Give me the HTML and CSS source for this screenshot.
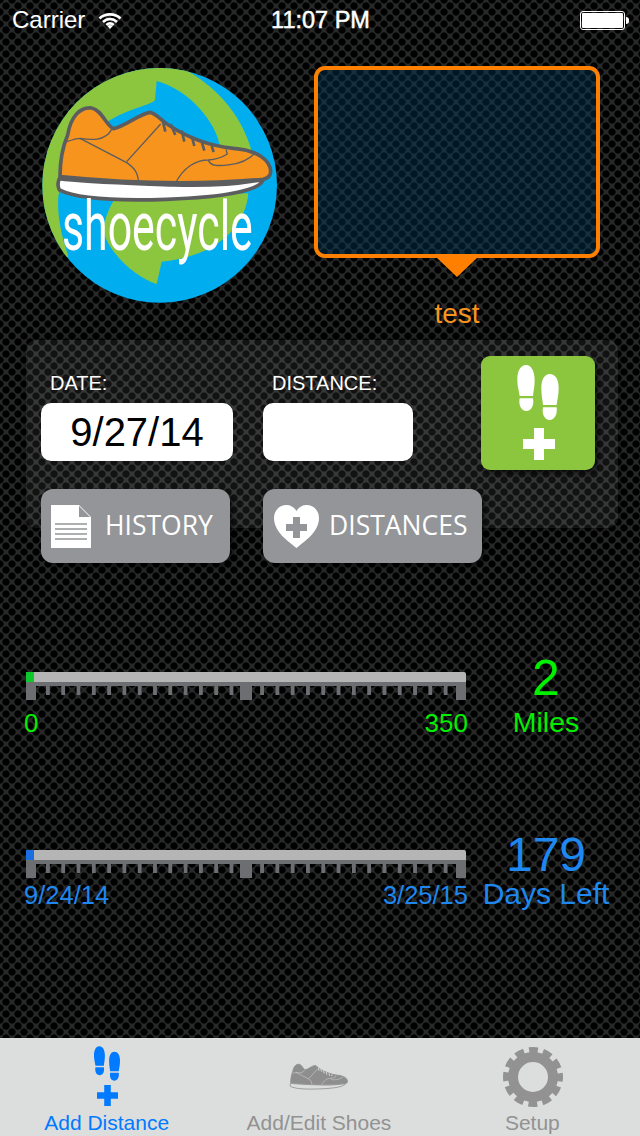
FILE: index.html
```html
<!DOCTYPE html>
<html lang="en">
<head>
<meta charset="utf-8">
<title>ShoeCycle</title>
<link rel="stylesheet" href="styles.css">
</head>
<body>
<svg class="defs" width="0" height="0" aria-hidden="true">
  <symbol id="prints" viewBox="0 0 124 165">
    <path d="M26 0C42 0 52 18 52 46C52 66 48 80 47 93L7 93C5 76 0 66 0 42C0 16 11 0 26 0Z"/>
    <path d="M7 100L47 100C51 122 42 138 27 138C12 138 3 122 7 100Z"/>
    <path d="M97 27C82 27 72 43 72 70C72 92 76 107 77 120L118 120C120 102 124 92 124 68C124 42 113 27 97 27Z"/>
    <path d="M77 127L118 127C121 149 111 165 97 165C82 165 73 149 77 127Z"/>
  </symbol>
  <symbol id="shoe" viewBox="165 310 660 300">
    <path class="shoe-sole" d="M178 536C250 546 400 550 520 555C620 558 720 552 790 538C782 570 680 592 500 598C380 602 240 602 178 570Q170 553 178 536Z"/>
    <path class="shoe-upper" d="M180 530C180 490 188 440 203 405C212 350 240 320 275 324C305 330 318 375 340 386C375 380 420 340 450 337C470 340 480 360 510 378C560 410 630 438 700 445C770 450 812 480 812 515C812 530 800 535 790 538C600 555 400 552 180 530Z"/>
    <g class="shoe-line">
      <path d="M200 425C215 420 230 415 240 415C270 420 315 425 335 388"/>
      <path d="M240 415L380 488C405 505 415 520 415 548"/>
      <path d="M380 485L482 372"/>
      <path d="M525 553C550 500 590 480 625 480C650 478 670 470 682 462L678 448"/>
      <path d="M625 480C630 500 660 498 690 494C720 490 745 480 762 462"/>
    </g>
    <g class="shoe-lace">
      <path d="M488 362L496 395M512 372L526 405M545 392L553 425M575 408L583 438M605 425L613 452M635 438L641 456"/>
    </g>
  </symbol>
</svg>

<div class="screen">
  <header class="status">
    <div class="status-left">
      <span>Carrier</span>
      <svg class="wifi" viewBox="0 0 24 17" aria-hidden="true">
        <path class="wifi-arc" d="M1.5 6.5C7 1 17 1 22.5 6.5M5 10C9 6 15 6 19 10M8.3 13C10.5 11 13.5 11 15.7 13"/>
        <path class="wifi-dot" d="M12 17L9.3 14C11 12.8 13 12.8 14.7 14Z"/>
      </svg>
    </div>
    <span class="clock">11:07 PM</span>
    <div class="battery"><div class="battery-body"><div class="battery-fill"></div></div><div class="battery-tip"></div></div>
  </header>

  <section class="top">
    <svg class="logo" viewBox="120 195 720 725" role="img" aria-label="ShoeCycle logo">
      <defs><clipPath id="globe"><circle cx="479" cy="556" r="352"/></clipPath></defs>
      <circle cx="479" cy="556" r="352" fill="#00aeef"/>
      <g clip-path="url(#globe)" fill="#8cc63f">
        <path d="M530 195C620 240 720 320 757 460L660 440C650 370 570 270 470 243L465 300C455 315 400 320 330 360L200 450L175 590C170 660 190 720 205 770L100 800L100 195Z"/>
        <path d="M745 580C735 690 640 770 485 785L470 852C400 830 320 750 310 690C315 650 330 620 345 595Z"/>
      </g>
      <use href="#shoe" class="logo-shoe" x="165" y="310" width="660" height="300"/>
      <text class="logo-word" transform="translate(186 750) scale(0.63 1)">shoecycle</text>
    </svg>
    <div class="shoe-name">
      <div class="bubble"></div>
      <div class="bubble-tail"></div>
      <div class="name">test</div>
    </div>
  </section>

  <section class="panel">
    <div class="form">
      <label class="field-label">DATE:</label>
      <label class="field-label">DISTANCE:</label>
      <div class="input input-date">9/27/14</div>
      <div class="input input-distance"></div>
      <div class="btn btn-history">
        <svg class="btn-icon doc" viewBox="0 0 40 43" aria-hidden="true">
          <path class="doc-page" d="M0 0H28L40 12V43H0Z"/>
          <path class="doc-fold" d="M28 1L39 12H28Z"/>
          <path class="doc-lines" d="M4 19H36M4 24H36M4 29H36M4 34H36"/>
        </svg>
        <span>HISTORY</span>
      </div>
      <div class="btn btn-distances">
        <svg class="btn-icon heart" viewBox="0 0 45 43" aria-hidden="true">
          <path class="heart-shape" d="M22.5 43C14 36 0 27 0 13C0 5 6 0 12.500 0C17 0 20.500 2.500 22.500 6C24.500 2.500 28 0 32.500 0C39 0 45 5 45 13C45 27 31 36 22.500 43Z"/>
          <path class="heart-plus" d="M19 12H26V19H33V26H26V33H19V26H12V19H19Z"/>
        </svg>
        <span>DISTANCES</span>
      </div>
    </div>
    <div class="add-btn">
      <svg class="add-prints"><use href="#prints"/></svg>
      <svg class="add-plus" viewBox="0 0 32 32" aria-hidden="true"><path d="M11 0H21V11H32V21H21V32H11V21H0V11H11Z"/></svg>
    </div>
  </section>

  <section class="stat stat-miles">
    <div class="gauge">
      <div class="track"><div class="fill"></div></div>
      <div class="scale"><i></i><i></i><i></i></div>
      <div class="ends"><span>0</span><span>350</span></div>
    </div>
    <div class="reading">
      <div class="value">2</div>
      <div class="unit">Miles</div>
    </div>
  </section>

  <section class="stat stat-days">
    <div class="gauge">
      <div class="track"><div class="fill"></div></div>
      <div class="scale"><i></i><i></i><i></i></div>
      <div class="ends"><span>9/24/14</span><span>3/25/15</span></div>
    </div>
    <div class="reading">
      <div class="value">179</div>
      <div class="unit">Days Left</div>
    </div>
  </section>

  <nav class="tabs">
    <div class="tab tab-active">
      <div class="tab-icon tab-icon-add">
        <svg class="tab-prints"><use href="#prints"/></svg>
        <svg class="tab-plus" viewBox="0 0 32 32" aria-hidden="true"><path d="M11 0H21V11H32V21H21V32H11V21H0V11H11Z"/></svg>
      </div>
      <span>Add Distance</span>
    </div>
    <div class="tab tab-shift">
      <div class="tab-icon">
        <svg class="tab-shoe"><use href="#shoe"/></svg>
      </div>
      <span>Add/Edit Shoes</span>
    </div>
    <div class="tab tab-shift">
      <div class="tab-icon">
        <svg class="gear" viewBox="0 0 60 60" aria-hidden="true">
          <circle class="gear-body" cx="30" cy="30" r="20"/>
          <circle class="gear-teeth" cx="30" cy="30" r="27"/>
        </svg>
      </div>
      <span>Setup</span>
    </div>
  </nav>
</div>
</body>
</html>
```

FILE: styles.css
```css
* { box-sizing: border-box; }
html, body { margin: 0; padding: 0; }
body {
  width: 640px;
  height: 1136px;
  overflow: hidden;
  font-family: "Liberation Sans", Arial, sans-serif;
}
.defs { display: block; height: 0; }

.screen {
  width: 640px;
  height: 1136px;
  display: flex;
  flex-direction: column;
  background-color: #272828;
  background-image:
    radial-gradient(circle at center, #000 3.2px, rgba(0,0,0,0) 4px),
    radial-gradient(circle at center, #000 3.2px, rgba(0,0,0,0) 4px);
  background-size: 12px 12px;
  background-position: 0 0, 6px 6px;
}

/* status bar */
.status {
  height: 40px;
  padding: 0 11px 0 12px;
  display: grid;
  grid-template-columns: 1fr auto 1fr;
  align-items: center;
  color: #fff;
  font-size: 24px;
}
.status-left { display: flex; align-items: center; gap: 13px; }
.wifi { width: 24px; height: 17px; }
.wifi-arc { fill: none; stroke: #fff; stroke-width: 2.600; }
.wifi-dot { fill: #fff; }
.clock { font-size: 23.500px; -webkit-text-stroke: 0.5px #fff; }
.battery { display: flex; align-items: center; justify-self: end; }
.battery-body { width: 45px; height: 19px; border: 1px solid #fff; border-radius: 3px; padding: 1px; }
.battery-fill { height: 100%; background: #fff; border-radius: 1px; }
.battery-tip { width: 3px; height: 7px; background: #fff; border-radius: 0 3px 3px 0; margin-left: 1px; }

/* logo + bubble */
.top {
  display: flex;
  align-items: flex-start;
  padding: 25px 0 0 40px;
  height: 300px;
}
.logo { width: 240px; height: 241.670px; flex: none; }
.logo-shoe { --up: #f7941e; --out: #5c5d5f; --ln: #5c5d5f; --sole: #fff; --lw: 4; --sw: 11; }
.logo-word {
  fill: #fff;
  font-family: "Roboto", "Liberation Sans", sans-serif;
  font-size: 204px;
}
.shoe-sole { fill: var(--sole); stroke: var(--out); stroke-width: var(--sw); stroke-linejoin: round; }
.shoe-upper { fill: var(--up); stroke: var(--out); stroke-width: var(--sw); stroke-linejoin: round; }
.shoe-line { fill: none; stroke: var(--ln); stroke-width: var(--lw); }
.shoe-lace { fill: none; stroke: var(--ln); stroke-width: calc(var(--lw) * 2); }

.shoe-name {
  margin: 1px 0 0 34px;
  width: 286px;
  display: flex;
  flex-direction: column;
  align-items: center;
}
.bubble {
  width: 286px;
  height: 192px;
  border: 4px solid #ff8000;
  border-radius: 11px;
  background: rgba(0, 58, 90, 0.41);
}
.bubble-tail {
  width: 0;
  height: 0;
  border-left: 20px solid transparent;
  border-right: 20px solid transparent;
  border-top: 19px solid #ff8000;
}
.name {
  margin-top: 21px;
  color: #f7941e;
  font-size: 28px;
  line-height: 32px;
}

/* form panel */
.panel {
  margin: 0 22px 0 26px;
  width: 592px;
  height: 188px;
  padding: 16px 0 0 15px;
  display: flex;
  align-items: flex-start;
  background: rgba(255, 255, 255, 0.07);
  border-radius: 10px;
  box-shadow: 0 0 8px rgba(0, 0, 0, 0.6);
}
.form {
  width: 440px;
  margin-top: 15px;
  display: grid;
  grid-template-columns: 222px 218px;
  grid-template-rows: 22px 58px 74px;
  row-gap: 10px;
}
.field-label { color: #fff; font-size: 20px; line-height: 24px; padding-left: 9px; }
.input {
  background: #fff;
  border-radius: 10px;
  color: #000;
  font-size: 40px;
  line-height: 58px;
  text-align: center;
}
.input-date { width: 192px; }
.input-distance { width: 150px; }
.btn {
  margin-top: 18px;
  height: 74px;
  display: flex;
  align-items: center;
  background: #939598;
  border-radius: 12px;
  box-shadow: 3px 3px 6px rgba(0, 0, 0, 0.6);
  color: #fff;
  font-family: "Open Sans", "Liberation Sans", sans-serif;
  font-size: 26.500px;
  line-height: 70px;
}
.btn-history { width: 189px; padding-left: 10px; gap: 14px; }
.btn-distances { width: 219px; padding-left: 11px; gap: 10px; }
.btn span { padding-bottom: 3px; }
.btn-icon { flex: none; }
.doc { width: 40px; height: 43px; }
.doc-page { fill: #fff; }
.doc-fold { fill: #939598; }
.doc-lines { stroke: #939598; stroke-width: 1.500; fill: none; }
.heart { width: 45px; height: 43px; }
.heart-shape { fill: #fff; }
.heart-plus { fill: #939598; }

.add-btn {
  width: 114px;
  height: 114px;
  padding-top: 9px;
  display: flex;
  flex-direction: column;
  align-items: center;
  background: #8cc63f;
  border-radius: 9px;
  box-shadow: 3px 4px 6px rgba(0, 0, 0, 0.6);
  color: #fff;
}
.add-prints { width: 42px; height: 55px; fill: #fff; }
.add-plus { width: 32px; height: 32px; margin-top: 8px; margin-left: 2px; fill: #fff; }

/* gauges */
.stat {
  display: flex;
  align-items: flex-start;
  margin-left: 26px;
}
.stat-miles { padding-top: 122px; --accent: #00f000; --fill: #0cc82a; }
.stat-days { padding-top: 89px; --accent: #1e88f0; --fill: #1a6fe0; }
.gauge { width: 440px; padding-top: 22px; }
.track { height: 10px; background: #b5b5b5; border-radius: 0 2px 0 0; }
.fill { width: 8px; height: 10px; background: var(--fill); }
.scale {
  height: 18px;
  border-top: 4px solid #6d6e71;
  display: flex;
  justify-content: space-between;
  background-image: linear-gradient(90deg, #6d6e71 4px, transparent 4px);
  background-size: 15.300px 9px;
  background-position: 20px 0;
  background-repeat: repeat-x;
}
.scale i { display: block; height: 14px; width: 10px; background: #6d6e71; }
.scale i:nth-child(2) { width: 12px; }
.ends {
  display: flex;
  justify-content: space-between;
  margin: 8px -2px 0;
  color: var(--accent);
  font-size: 26px;
  line-height: 30px;
}
.stat-days .ends { margin-top: 2px; font-size: 25.500px; }
.reading {
  width: 160px;
  text-align: center;
  color: var(--accent);
}
.value { font-size: 50px; line-height: 56px; }
.unit { font-size: 28.500px; line-height: 34px; white-space: nowrap; margin-top: -1px; }
.stat-days .value { font-size: 48px; line-height: 54px; }
.stat-days .unit { font-size: 30px; margin-top: -5px; }

/* tab bar */
.tabs {
  margin-top: auto;
  height: 98px;
  display: grid;
  grid-template-columns: repeat(3, 1fr);
  background: #dcdedd;
}
.tab {
  display: flex;
  flex-direction: column;
  align-items: center;
  color: #929292;
  font-size: 21px;
  line-height: 24px;
}
.tab-shift { padding-right: 2px; }
.tab-active { color: #007aff; }
.tab-icon {
  height: 73px;
  display: flex;
  flex-direction: column;
  align-items: center;
  justify-content: center;
}
.tab-prints { width: 26px; height: 35px; fill: #007aff; margin-top: 2px; }
.tab-plus { width: 21px; height: 21px; margin-top: 4px; margin-left: 2px; fill: #007aff; }
.tab-shoe {
  width: 60px;
  height: 27px;
  margin-top: 3px;
  --up: #8e8e8e;
  --out: #8e8e8e;
  --ln: #d0d2d1;
  --sole: #dcdedd;
  --lw: 6;
  --sw: 9;
}
.gear { width: 60px; height: 60px; margin-top: 4px; margin-left: 2px; }
.gear-body { fill: none; stroke: #929292; stroke-width: 10; }
.gear-teeth { fill: none; stroke: #929292; stroke-width: 6; stroke-dasharray: 9 5.137; stroke-dashoffset: 4.500; }
```
